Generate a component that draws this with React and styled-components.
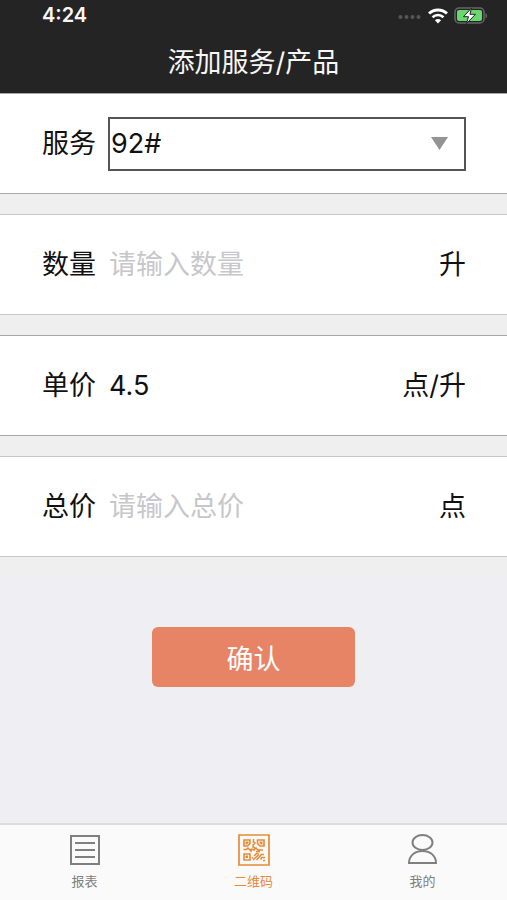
import React, { useState } from 'react';
import styled, { createGlobalStyle } from 'styled-components';

const GlobalStyle = createGlobalStyle`
  *, *::before, *::after {
    box-sizing: border-box;
  }

  body {
    margin: 0;
    background: #eeeef3;
  }

  body, input, select, button {
    font-family: Inter, "Noto Sans CJK SC", sans-serif;
  }
`;

const Page = styled.div`
  display: flex;
  flex-direction: column;
  min-height: 100vh;
  background: #eeeef3;
`;

const Header = styled.header`
  background: #242424;
  color: #f6f6f6;
`;

const StatusBar = styled.div`
  display: flex;
  align-items: center;
  justify-content: space-between;
  height: 31px;
  padding: 0 19px 0 42px;
`;

const Time = styled.time`
  font-size: 20px;
  line-height: 31px;
  font-weight: 600;
`;

const StatusIcons = styled.div`
  display: flex;
  align-items: center;
  gap: 6px;

  svg {
    display: block;
  }
`;

const Title = styled.h1`
  margin: 0;
  height: 62px;
  font-size: 27px;
  line-height: 64px;
  font-weight: 400;
  text-align: center;
`;

const Form = styled.form`
  flex: 1;
`;

const Fields = styled.div`
  display: flex;
  flex-direction: column;
  gap: 20px;
  padding-bottom: 20px;
  background: #efefef;
`;

const Row = styled.div`
  display: flex;
  align-items: center;
  gap: 12px;
  height: 101px;
  padding: 0 41px 0 42px;
  background: #fff;
  border-top: 1px solid ${({ $strong }) => ($strong ? '#a8a8a8' : '#c8c8c8')};
  border-bottom: 1px solid ${({ $strong }) => ($strong ? '#a8a8a8' : '#c8c8c8')};
  color: #111;
  font-size: 27px;
  line-height: 40px;
`;

const Label = styled.label`
  flex-shrink: 0;
`;

const Input = styled.input`
  flex: 1;
  min-width: 0;
  height: 54px;
  padding: 0 1px;
  border: 0;
  outline: 0;
  background: transparent;
  color: #111;
  font-size: 27px;

  &::placeholder {
    color: #c7c7cb;
    opacity: 1;
  }
`;

const Unit = styled.span`
  flex-shrink: 0;
`;

const SelectBox = styled.div`
  position: relative;
  flex: 1;
  min-width: 0;

  svg {
    position: absolute;
    top: 20px;
    right: 18px;
    pointer-events: none;
  }
`;

const Select = styled.select`
  display: block;
  appearance: none;
  width: 100%;
  height: 54px;
  padding: 0 40px 0 1px;
  border: 2px solid #555;
  border-radius: 0;
  background: #fff;
  color: #111;
  font-size: 27px;
`;

const SubmitButton = styled.button`
  display: block;
  width: 40%;
  height: 60px;
  margin: 50px auto;
  border: 0;
  border-radius: 6px;
  background: #e78466;
  color: #fff;
  font-size: 27px;
  cursor: pointer;
`;

const TabBar = styled.nav`
  display: flex;
  height: 77px;
  border-top: 2px solid #dcdce1;
  background: #fafafa;
`;

const Tab = styled.a`
  flex: 1;
  display: flex;
  flex-direction: column;
  align-items: center;
  gap: 5px;
  padding-top: 9px;
  color: ${({ $active }) => ($active ? '#e78a35' : '#7f7f7f')};
  font-size: 13px;
  line-height: 20px;
  text-decoration: none;
`;

const SignalDots = () => (
  <svg width="24" height="6" viewBox="0 0 24 6" fill="#565656" aria-hidden="true">
    <circle cx="2.500" cy="4" r="2" />
    <circle cx="8.500" cy="4" r="2" />
    <circle cx="14.500" cy="4" r="2" />
    <circle cx="20.500" cy="4" r="2" />
  </svg>
);

const WifiIcon = () => (
  <svg width="20" height="16" viewBox="0 0 20 16" fill="none" stroke="#fff" aria-hidden="true">
    <path d="M1 5.500a13 13 0 0 1 18 0" strokeWidth="3" />
    <path d="M4.500 9.200a8 8 0 0 1 11 0" strokeWidth="2.600" />
    <path d="M10 15.500 6.900 12.300a4.600 4.600 0 0 1 6.200 0z" fill="#fff" stroke="none" />
  </svg>
);

const BatteryIcon = () => (
  <svg width="34" height="18" viewBox="0 0 34 18" aria-hidden="true">
    <rect x="1" y="1" width="29" height="15" rx="4" fill="none" stroke="#666" strokeWidth="1.500" />
    <path d="M31.500 6v5.500c2-.7 2-4.800 0-5.500z" fill="#666" />
    <rect x="3" y="3" width="25" height="11" rx="2" fill="#67d86d" />
    <path
      d="M17.500 1 9.500 9.700h5l-2 6.800 9-9.200h-5.500z"
      fill="#fff"
      stroke="#242424"
      strokeWidth="1"
    />
  </svg>
);

const ArrowIcon = () => (
  <svg width="17" height="13" viewBox="0 0 17 13" fill="#949494" aria-hidden="true">
    <path d="M0 0h17L8.500 13z" />
  </svg>
);

const ReportIcon = () => (
  <svg width="32" height="32" viewBox="0 0 32 32" fill="none" stroke="currentColor" strokeWidth="2" aria-hidden="true">
    <path d="M2 2h28v28H2zM6 9h20M6 16h20M6 23h20" />
  </svg>
);

const QrIcon = () => (
  <svg width="32" height="32" viewBox="0 0 32 32" fill="none" stroke="currentColor" aria-hidden="true">
    <path d="M1 1h30v30H1z" strokeWidth="1.700" />
    <path d="M6 6h6v3.500L9.500 12H6zM19.500 6H26v6h-4l-2.500-2.500zM6 20h6v6H6z" strokeWidth="1.600" />
    <path
      d="M7.500 7.500h3v1.500l-1.500 1.500H7.500zM21.500 7.500h3v3h-1.500l-1.500-1.500zM7.500 21.500h2.500v2.500H7.500z"
      fill="currentColor"
      stroke="none"
    />
    <path
      d="M15.500 5v3l1.500 1-2 2v2l2 1M5.500 15.500h3l1.500-1.500 2 2 2-1 2 1 2-2 2 2h5M12 17h2M18 17.500h4M16 22l2.500-2.500h2M15 26l6-5.500M18.500 26l5-5.500h2.500M22.500 25.500l1.500-2h3M25 26.500h2M14.500 23v1.500"
      strokeWidth="1.500"
    />
  </svg>
);

const UserIcon = () => (
  <svg width="32" height="32" viewBox="0 0 32 32" fill="none" stroke="currentColor" strokeWidth="2" aria-hidden="true">
    <ellipse cx="15.500" cy="8.500" rx="10" ry="7.500" />
    <path d="M2 29c0-7 5.500-12 13.500-12S29 22 29 29z" />
  </svg>
);

const tabs = [
  { id: 'report', label: '报表', Icon: ReportIcon },
  { id: 'qrcode', label: '二维码', Icon: QrIcon },
  { id: 'mine', label: '我的', Icon: UserIcon },
];

export default function App() {
  const [service, setService] = useState('92#');
  const [amount, setAmount] = useState('');
  const [price, setPrice] = useState('4.5');
  const [total, setTotal] = useState('');

  return (
    <Page>
      <GlobalStyle />
      <Header>
        <StatusBar>
          <Time>4:24</Time>
          <StatusIcons>
            <SignalDots />
            <WifiIcon />
            <BatteryIcon />
          </StatusIcons>
        </StatusBar>
        <Title>添加服务/产品</Title>
      </Header>

      <Form onSubmit={e => e.preventDefault()}>
        <Fields>
          <Row $strong>
            <Label htmlFor="service">服务</Label>
            <SelectBox>
              <Select id="service" value={service} onChange={e => setService(e.target.value)}>
                <option value="92#">92#</option>
              </Select>
              <ArrowIcon />
            </SelectBox>
          </Row>
          <Row>
            <Label htmlFor="amount">数量</Label>
            <Input
              id="amount"
              placeholder="请输入数量"
              value={amount}
              onChange={e => setAmount(e.target.value)}
            />
            <Unit>升</Unit>
          </Row>
          <Row $strong>
            <Label htmlFor="price">单价</Label>
            <Input id="price" value={price} onChange={e => setPrice(e.target.value)} />
            <Unit>点/升</Unit>
          </Row>
          <Row>
            <Label htmlFor="total">总价</Label>
            <Input
              id="total"
              placeholder="请输入总价"
              value={total}
              onChange={e => setTotal(e.target.value)}
            />
            <Unit>点</Unit>
          </Row>
        </Fields>
        <SubmitButton type="submit">确认</SubmitButton>
      </Form>

      <TabBar>
        {tabs.map(({ id, label, Icon }) => (
          <Tab key={id} href={`#${id}`} $active={id === 'qrcode'}>
            <Icon />
            {label}
          </Tab>
        ))}
      </TabBar>
    </Page>
  );
}
